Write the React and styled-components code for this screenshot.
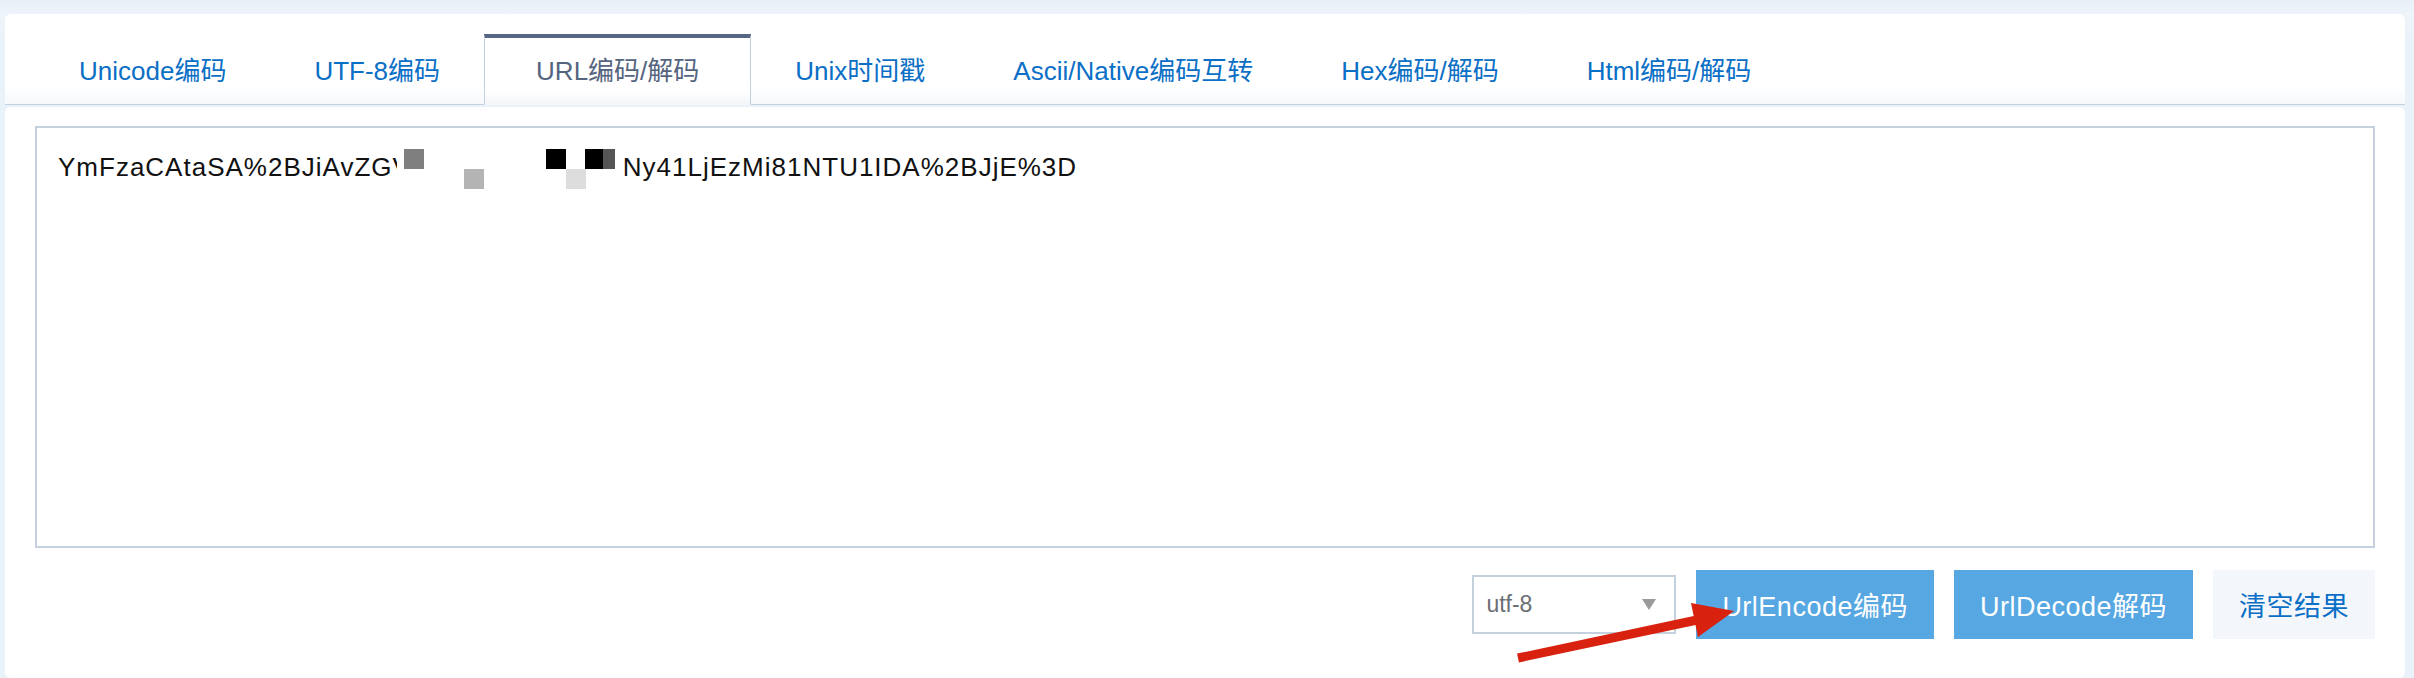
import React, { useState } from 'react';
import styled, { createGlobalStyle } from 'styled-components';

const GlobalStyle = createGlobalStyle`
  html, body {
    margin: 0;
    padding: 0;
    background: #eaf2f9;
  }
  body {
    font-family: "Liberation Sans", "Noto Sans CJK SC", sans-serif;
  }
`;

const Page = styled.div`
  position: relative;
  padding: 14px 9px 0 5px;
  min-height: 664px;
  background: linear-gradient(#e7eff8, #eef4fa 14px, #eaf2f9 40px);
`;

const TabCard = styled.div`
  background: linear-gradient(#ffffff 80%, #f6f8fb);
  border-radius: 6px 6px 0 0;
  padding: 20px 30px 0;
  border-bottom: 1px solid #c5d0de;
`;

const TabList = styled.ul`
  display: flex;
  margin: 0;
  padding: 0;
  list-style: none;
`;

const Tab = styled.li`
  height: 66px;
  line-height: 66px;
  padding: 0 ${(p) => (p.active ? '51px' : '43px')};
  font-size: 26px;
  white-space: nowrap;
  cursor: pointer;
  color: ${(p) => (p.active ? '#56657f' : '#0b6fc6')};
  border-top: 4px solid ${(p) => (p.active ? '#566785' : 'transparent')};
  border-left: 1px solid ${(p) => (p.active ? '#c5d0de' : 'transparent')};
  border-right: 1px solid ${(p) => (p.active ? '#c5d0de' : 'transparent')};
  background: ${(p) => (p.active ? 'linear-gradient(#ffffff 80%, #f3f6fa)' : 'transparent')};
  margin-bottom: -1px;
  border-bottom: 1px solid ${(p) => (p.active ? '#f3f6fa' : 'transparent')};
`;

const ContentCard = styled.div`
  margin-top: 2px;
  background: #ffffff;
  border-radius: 6px;
  padding: 19px 30px 39px;
`;

const Editor = styled.div`
  box-sizing: border-box;
  height: 422px;
  border: 2px solid #c6d1df;
  padding: 20px 21px;
  font-size: 26px;
  line-height: 38px;
  letter-spacing: 1px;
  color: #111;
  white-space: nowrap;
  overflow: hidden;
`;

/* white patch hiding part of the text, with the mosaic squares on it */
const Redaction = styled.span`
  position: relative;
  display: inline-block;
  width: 226px;
  height: 38px;
  vertical-align: top;
  margin-left: -14px;
  background: #fff;
`;

const Block = styled.span`
  position: absolute;
  width: 20px;
  height: 20px;
  background: ${(p) => p.color};
`;

const Toolbar = styled.div`
  display: flex;
  justify-content: flex-end;
  align-items: center;
  gap: 20px;
  margin-top: 22px;
  height: 69px;
`;

const Select = styled.div`
  box-sizing: border-box;
  width: 204px;
  height: 59px;
  border: 2px solid #c6d1df;
  display: flex;
  align-items: center;
  justify-content: space-between;
  padding: 0 18px 0 12px;
  font-size: 23px;
  color: #6a6e75;
`;

const Caret = styled.span`
  width: 0;
  height: 0;
  border-left: 7px solid transparent;
  border-right: 7px solid transparent;
  border-top: 11px solid #9a9a9a;
`;

const Button = styled.button`
  height: 69px;
  padding: 0 26px;
  border: none;
  font-family: inherit;
  font-size: 27px;
  letter-spacing: 0.5px;
  cursor: pointer;
  background: ${(p) => (p.light ? '#f3f7fb' : '#56a7e2')};
  color: ${(p) => (p.light ? '#0b6fc6' : '#ffffff')};
`;

const Arrow = styled.svg`
  position: absolute;
  left: 1505px;
  top: 595px;
  pointer-events: none;
`;

const tabs = [
  'Unicode编码',
  'UTF-8编码',
  'URL编码/解码',
  'Unix时间戳',
  'Ascii/Native编码互转',
  'Hex编码/解码',
  'Html编码/解码',
];

export default function App() {
  const [active, setActive] = useState(2);

  return (
    <Page>
      <GlobalStyle />
      <TabCard>
        <TabList>
          {tabs.map((t, i) => (
            <Tab key={t} active={i === active} onClick={() => setActive(i)}>
              {t}
            </Tab>
          ))}
        </TabList>
      </TabCard>

      <ContentCard>
        <Editor>
          <span>YmFzaCAtaSA%2BJiAvZGV</span>
          <Redaction>
            <Block color="#7f7f7f" style={{ left: 7, top: 1 }} />
            <Block color="#b4b4b4" style={{ left: 67, top: 21 }} />
            <Block color="#000000" style={{ left: 149, top: 1 }} />
            <Block color="#dddddd" style={{ left: 169, top: 21 }} />
            <Block color="#000000" style={{ left: 188, top: 1 }} />
            <Block color="#555555" style={{ left: 206, top: 1, width: 12 }} />
          </Redaction>
          <span>Ny41LjEzMi81NTU1IDA%2BJjE%3D</span>
        </Editor>

        <Toolbar>
          <Select>
            <span>utf-8</span>
            <Caret />
          </Select>
          <Button>UrlEncode编码</Button>
          <Button>UrlDecode解码</Button>
          <Button light>清空结果</Button>
        </Toolbar>
      </ContentCard>

      <Arrow width="240" height="75" viewBox="0 0 240 75">
        <line x1="13" y1="63" x2="192" y2="25" stroke="#d9210f" strokeWidth="9" />
        <polygon points="186,8 193,42 229,16" fill="#d9210f" />
      </Arrow>
    </Page>
  );
}
